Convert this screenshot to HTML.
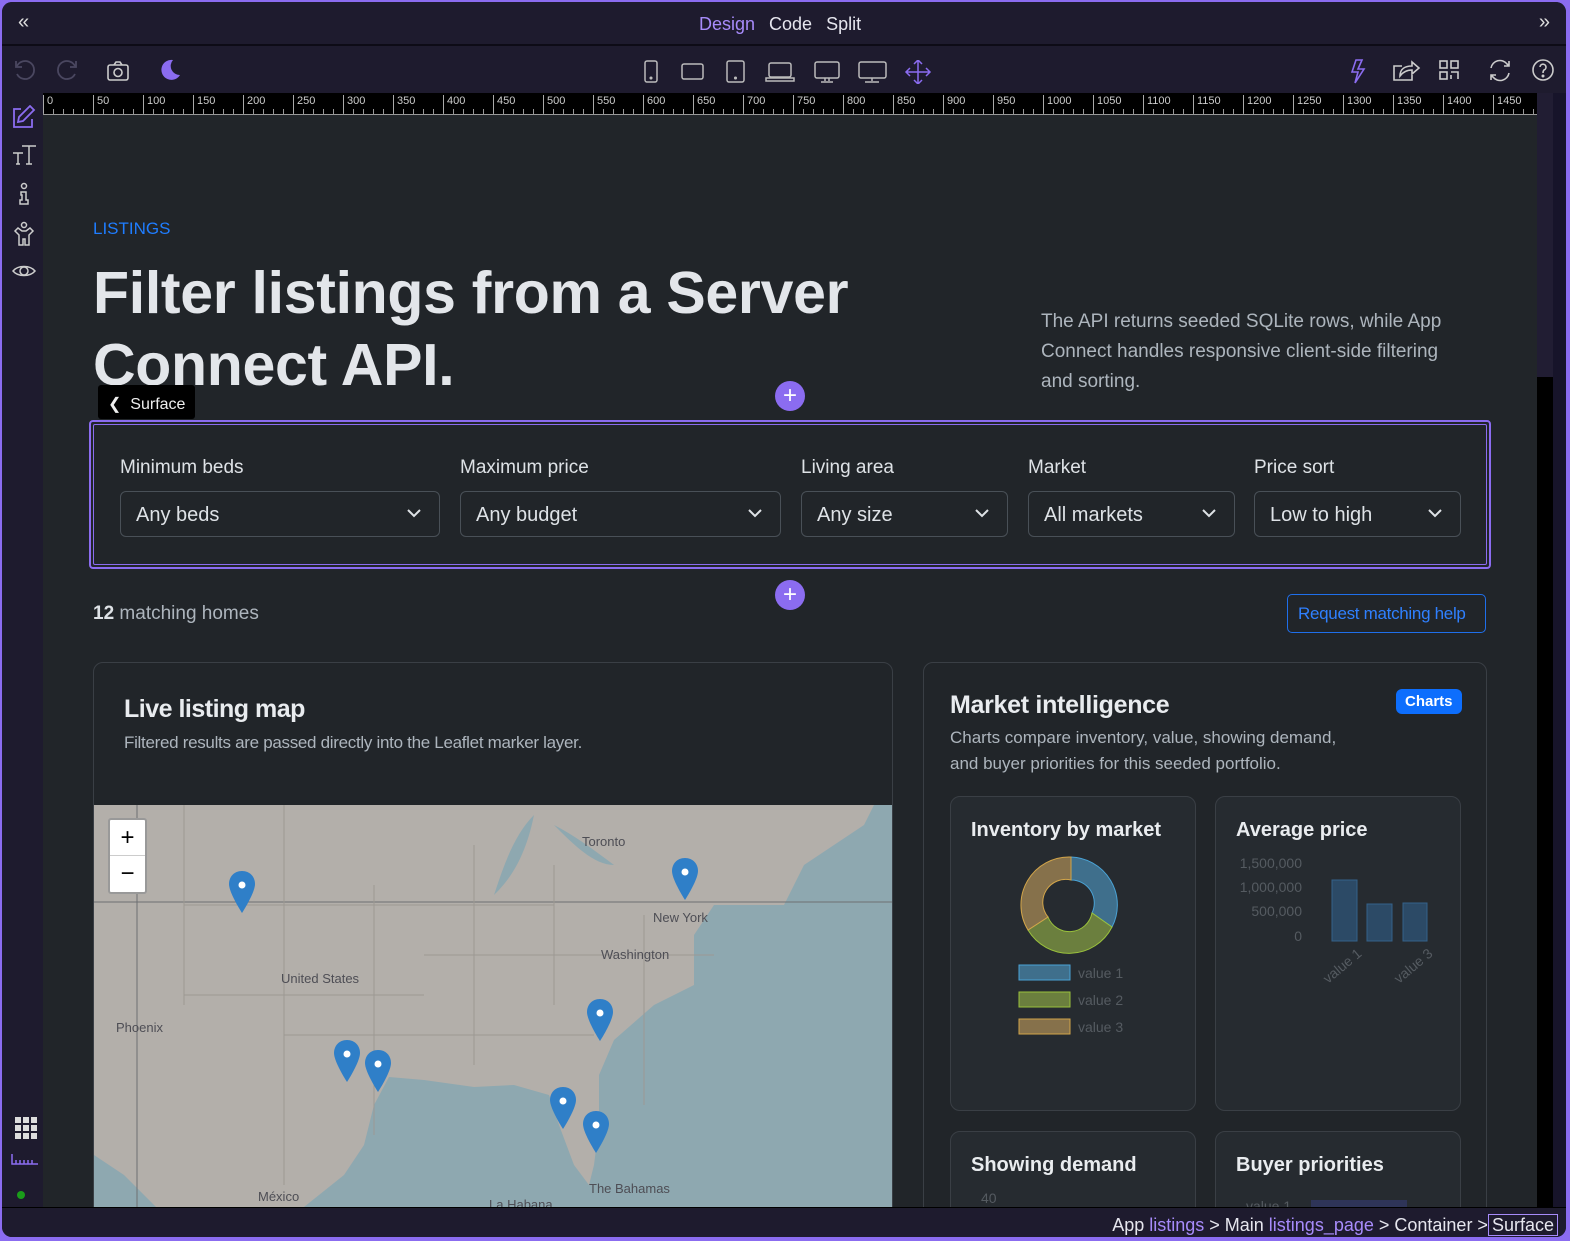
<!DOCTYPE html>
<html><head><meta charset="utf-8">
<style>
*{box-sizing:border-box;margin:0;padding:0}
body{width:1570px;height:1241px;background:#8b6cf0;font-family:"Liberation Sans",sans-serif;overflow:hidden;position:relative}
.win{position:absolute;left:2px;top:2px;width:1564px;height:1235px;background:#1e1b2e;border-radius:10px;overflow:hidden}
.abs{position:absolute}
.hdr{left:0;top:0;width:1564px;height:44px;background:#1e1b2e;border-bottom:2px solid #0d0b16}
.tabs{position:absolute;left:697px;top:12px;font-size:18px;color:#e6e6ee}
.tabs span{margin-right:14px}
.tb{left:0;top:46px;width:1564px;height:45px;background:#1e1b2e}
.ruler{left:41px;top:91px;width:1494px;height:22px;background:#000;overflow:hidden}
.ruler span{position:absolute;top:2px;font-size:11px;color:#ccc;border-left:1px solid #aaa;padding-left:3px;height:18px}
.canvas{left:41px;top:113px;width:1494px;height:1092px;background:#212529;overflow:hidden}
.side{left:0;top:91px;width:41px;height:1114px;background:#1e1b2e}
.status{left:0;top:1205px;width:1564px;height:30px;background:#1e1b2e;border-top:1px solid #000}
.c{font-family:"Liberation Sans",sans-serif}
.lbl{font-size:19px;color:#dee2e6}
.sel{position:absolute;top:69px;height:46px;border:1px solid #495057;border-radius:6px;font-size:20px;color:#dee2e6;padding:12px 15px}
.sel svg{position:absolute;right:18px;top:17px}
.card{position:absolute;border:1px solid #3a3f45;border-radius:10px;background:#212529}
.icard{position:absolute;border:1px solid #3a3f45;border-radius:10px;background:#262b30}
.icard h4{position:absolute;left:20px;top:22px;font-size:20px;color:#e9ecef;font-weight:bold}
.g{font-size:14px;color:#555b61}
</style></head><body>
<div class="win">
 <div class="abs hdr">
  <div class="abs" style="left:16px;top:9px;color:#ddd;font-size:20px">«</div>
  <div class="tabs"><span style="color:#a78bfa">Design</span><span>Code</span><span>Split</span></div>
  <div class="abs" style="right:16px;top:9px;color:#ddd;font-size:20px">»</div>
 </div>
 <div class="abs tb">
  <svg class="abs" style="left:10px;top:10px" width="70" height="26" viewBox="0 0 70 26" fill="none" stroke="#4a4760" stroke-width="1.8"><path d="M5 8a9 9 0 1 1 0 8"/><path d="M4 3v6h6"/><path d="M63 8a9 9 0 1 0 0 8"/><path d="M64 3v6h-6"/></svg>
  <svg class="abs" style="left:104px;top:12px" width="24" height="22" viewBox="0 0 24 22" fill="none" stroke="#ccc" stroke-width="1.6"><rect x="2" y="5" width="20" height="15" rx="2"/><path d="M8 5l2-3h4l2 3"/><circle cx="12" cy="12.5" r="4"/></svg>
  <svg class="abs" style="left:156px;top:10px" width="24" height="24" viewBox="0 0 24 24"><path d="M15 2a10 10 0 1 0 7 15A9 9 0 0 1 15 2z" fill="#8b6cf0"/></svg>
  <svg class="abs" style="left:640px;top:12px" width="290" height="24" viewBox="0 0 290 24" fill="none" stroke="#bbb" stroke-width="1.5">
   <rect x="3" y="1" width="12" height="21" rx="2"/><circle cx="9" cy="18" r=".8" fill="#bbb"/>
   <rect x="40" y="4" width="21" height="15" rx="2"/>
   <rect x="85" y="1" width="17" height="21" rx="2"/><circle cx="93.5" cy="18" r=".8" fill="#bbb"/>
   <rect x="127" y="3" width="22" height="14" rx="2"/><path d="M124 18h28v3h-28z"/>
   <rect x="173" y="2" width="24" height="16" rx="2"/><path d="M183 18v3M187 18v3M179 22h12"/>
   <rect x="217" y="2" width="27" height="16" rx="2"/><path d="M230 18v3M223 22h14"/>
   <g stroke="#8b6cf0"><path d="M276 0v24M264 12h24M272 4l4-4 4 4M272 20l4 4 4-4M268 8l-4 4 4 4M284 8l4 4-4 4"/></g>
  </svg>
  <svg class="abs" style="left:1348px;top:10px" width="210" height="26" viewBox="0 0 210 26" fill="none" stroke="#ccc" stroke-width="1.6">
   <path d="M6 2l-4 12h6l-3 11 9-14h-6l4-9z" stroke="#8b6cf0"/>
   <path d="M52 8h-8v14h18v-5M50 18c0-7 5-10 12-10V4l7 6-7 6v-4c-5 0-9 2-12 6z"/>
   <rect x="90" y="3" width="7" height="7"/><rect x="101" y="3" width="7" height="7"/><rect x="90" y="14" width="7" height="7"/><path d="M101 14h7v7M101 17v4"/>
   <path d="M141 10a9 9 0 0 1 16-4l2 2M159 3v5h-5M159 15a9 9 0 0 1-16 4l-2-2M141 22v-5h5"/>
   <circle cx="193" cy="12" r="10"/><path d="M190 9a3 3 0 1 1 4 3c-1 1-1 2-1 3"/><circle cx="193" cy="18" r=".7" fill="#ccc"/>
  </svg>
 </div>
 <div class="abs ruler">
  <div style="position:absolute;left:0;right:0;bottom:0;height:6px;background:repeating-linear-gradient(90deg,#999 0 1px,transparent 1px 10px)"></div>
  <div style="position:absolute;left:0;right:0;bottom:0;height:1px;background:#999"></div>
  <span style="left:0">0</span><span style="left:50px">50</span><span style="left:100px">100</span><span style="left:150px">150</span><span style="left:200px">200</span><span style="left:250px">250</span><span style="left:300px">300</span><span style="left:350px">350</span><span style="left:400px">400</span><span style="left:450px">450</span><span style="left:500px">500</span><span style="left:550px">550</span><span style="left:600px">600</span><span style="left:650px">650</span><span style="left:700px">700</span><span style="left:750px">750</span><span style="left:800px">800</span><span style="left:850px">850</span><span style="left:900px">900</span><span style="left:950px">950</span><span style="left:1000px">1000</span><span style="left:1050px">1050</span><span style="left:1100px">1100</span><span style="left:1150px">1150</span><span style="left:1200px">1200</span><span style="left:1250px">1250</span><span style="left:1300px">1300</span><span style="left:1350px">1350</span><span style="left:1400px">1400</span><span style="left:1450px">1450</span><span style="left:1500px">1500</span>
 </div>
 <div class="abs side">
  <svg class="abs" style="left:9px;top:12px" width="26" height="190" viewBox="0 0 26 190" fill="none" stroke="#ccc" stroke-width="1.5">
   <g stroke="#8b6cf0" stroke-width="1.8"><path d="M10 4H3v18h18v-8"/><path d="M19 1l4 4-11 11-5 1 1-5z"/></g>
   <path d="M2 48h10M7 48v11M5 59h4M11 41h14M18 41v18M15 59h6"/>
   <circle cx="13" cy="81" r="2.5"/><path d="M10 87h5v8h2v4H9v-4h2v-5h-1z"/>
   <path d="M8 130l-4-4 3-3 4 3h4l4-3 3 3-4 4v10h-4v-6h-2v6H8z"/><circle cx="13" cy="120" r="2.5"/>
   <path d="M2 166c5-6 17-6 22 0-5 6-17 6-22 0z"/><circle cx="13" cy="166" r="4"/>
  </svg>
  <div class="abs" style="left:13px;top:1024px;width:22px;height:22px;background:repeating-linear-gradient(90deg,#ddd 0 6px,transparent 6px 8px);-webkit-mask:repeating-linear-gradient(#000 0 6px,transparent 6px 8px)"></div>
  <svg class="abs" style="left:9px;top:1060px" width="28" height="12" viewBox="0 0 28 12" fill="none" stroke="#8b6cf0" stroke-width="1.5"><path d="M1 1v10h26M5 11V7M9 11V7M13 11V7M17 11V7M21 11V7"/></svg>
  <div class="abs" style="left:15px;top:1098px;width:8px;height:8px;border-radius:50%;background:#1a9c1a"></div>
 </div>
 <div class="abs" style="left:1535px;top:91px;width:16px;height:1114px;background:#000"><div style="height:284px;background:#211d33"></div></div>
 <div class="abs" style="left:1551px;top:91px;width:13px;height:1114px;background:#17142a"></div>

 <div class="abs canvas">
  <div class="abs c" style="left:50px;top:104px;font-size:17px;color:#1f7dff">LISTINGS</div>
  <div class="abs c" style="left:50px;top:142px;font-size:59px;line-height:72px;font-weight:bold;color:#e3e6ea;letter-spacing:-0.3px;width:900px">Filter listings from a Server<br>Connect API.</div>
  <div class="abs c" style="left:998px;top:192px;font-size:19px;line-height:30px;color:#adb5bd;width:425px">The API returns seeded SQLite rows, while App Connect handles responsive client-side filtering and sorting.</div>
  <div class="abs c" style="left:55px;top:270px;height:34px;background:#000;color:#eee;font-size:16px;padding:9px 10px 0 10px;border-radius:3px">&#10094;&nbsp; Surface</div>
  <div class="abs" style="left:732px;top:266px;width:30px;height:30px;border-radius:50%;background:#8b6cf0;color:#fff;text-align:center;font-size:24px;line-height:29px">+</div>
  <div class="abs" style="left:46px;top:305px;width:1402px;height:149px;border:2px solid #8b6cf0;border-radius:4px">
   <div class="abs" style="left:2px;top:2px;right:2px;bottom:2px;border:1px solid #8b6cf0;border-radius:2px"></div>
   <div class="abs c lbl" style="left:29px;top:35px">Minimum beds</div>
   <div class="abs c lbl" style="left:369px;top:35px">Maximum price</div>
   <div class="abs c lbl" style="left:710px;top:35px">Living area</div>
   <div class="abs c lbl" style="left:937px;top:35px">Market</div>
   <div class="abs c lbl" style="left:1163px;top:35px">Price sort</div>
   <div class="sel c" style="left:29px;width:320px">Any beds<svg width="14" height="9" viewBox="0 0 14 9"><path d="M1 1l6 6 6-6" stroke="#dee2e6" stroke-width="2" fill="none"/></svg></div>
   <div class="sel c" style="left:369px;width:321px">Any budget<svg width="14" height="9" viewBox="0 0 14 9"><path d="M1 1l6 6 6-6" stroke="#dee2e6" stroke-width="2" fill="none"/></svg></div>
   <div class="sel c" style="left:710px;width:207px">Any size<svg width="14" height="9" viewBox="0 0 14 9"><path d="M1 1l6 6 6-6" stroke="#dee2e6" stroke-width="2" fill="none"/></svg></div>
   <div class="sel c" style="left:937px;width:207px">All markets<svg width="14" height="9" viewBox="0 0 14 9"><path d="M1 1l6 6 6-6" stroke="#dee2e6" stroke-width="2" fill="none"/></svg></div>
   <div class="sel c" style="left:1163px;width:207px">Low to high<svg width="14" height="9" viewBox="0 0 14 9"><path d="M1 1l6 6 6-6" stroke="#dee2e6" stroke-width="2" fill="none"/></svg></div>
  </div>
  <div class="abs" style="left:732px;top:465px;width:30px;height:30px;border-radius:50%;background:#8b6cf0;color:#fff;text-align:center;font-size:24px;line-height:29px">+</div>
  <div class="abs c" style="left:50px;top:488px;font-size:19px;color:#adb5bd"><b style="color:#dee2e6">12</b> matching homes</div>
  <div class="abs c" style="left:1244px;top:479px;width:199px;height:39px;border:1px solid #1f6feb;border-radius:5px;color:#2f80ff;font-size:17px;padding:9px 0 0 10px;letter-spacing:-0.3px">Request matching help</div>

  <div class="card" style="left:50px;top:547px;width:800px;height:560px;overflow:hidden">
   <div class="abs c" style="left:30px;top:32px;font-size:25px;font-weight:bold;color:#e9ecef;letter-spacing:-0.5px">Live listing map</div>
   <div class="abs c" style="left:30px;top:70px;font-size:17px;color:#adb5bd;letter-spacing:-0.3px">Filtered results are passed directly into the Leaflet marker layer.</div>
   <svg class="abs" style="left:0;top:142px" width="800" height="410" viewBox="0 0 800 410">
    <rect width="800" height="410" fill="#b3afaa"/>
    <path d="M800 0L780 0 770 20 740 40 710 60 700 80 690 100 640 100 620 100 600 130 600 180 560 200 520 235 505 270 505 320 500 360 495 380 480 360 465 320 455 290 420 280 380 282 330 275 295 272 280 300 270 340 250 370 200 410 800 410z" fill="#8ea8b0"/>
    <path d="M0 350L30 370 60 400 70 410 0 410z" fill="#8ea8b0"/>
    <path d="M440 10C430 60 410 80 400 90 410 60 420 30 440 10zM460 20C480 40 500 60 520 60 500 45 480 30 460 20z" fill="#8ea8b0"/>
    <path d="M0 97H800M43 0V410" stroke="#6d6f72" stroke-width="1"/>
    <g stroke="#9c9893" stroke-width="1" fill="none"><path d="M90 0V200M190 0V380M280 80V330M380 40V260M90 100H460M90 190H330M330 150H620M190 230H500M460 60V200M550 110V300"/></g>
    <g font-family="Liberation Sans" font-size="13" fill="#4e4e55"><text x="488" y="41">Toronto</text><text x="559" y="117">New York</text><text x="507" y="154">Washington</text><text x="187" y="178">United States</text><text x="22" y="227">Phoenix</text><text x="164" y="396">México</text><text x="495" y="388">The Bahamas</text><text x="395" y="404">La Habana</text></g>
    <g fill="#2f7fc8">
     <path transform="translate(148,66)" d="M0 0c-8 0-13 6-13 13 0 9 13 29 13 29s13-20 13-29c0-7-5-13-13-13z"/>
     <path transform="translate(591,53)" d="M0 0c-8 0-13 6-13 13 0 9 13 29 13 29s13-20 13-29c0-7-5-13-13-13z"/>
     <path transform="translate(506,194)" d="M0 0c-8 0-13 6-13 13 0 9 13 29 13 29s13-20 13-29c0-7-5-13-13-13z"/>
     <path transform="translate(253,235)" d="M0 0c-8 0-13 6-13 13 0 9 13 29 13 29s13-20 13-29c0-7-5-13-13-13z"/>
     <path transform="translate(284,245)" d="M0 0c-8 0-13 6-13 13 0 9 13 29 13 29s13-20 13-29c0-7-5-13-13-13z"/>
     <path transform="translate(469,282)" d="M0 0c-8 0-13 6-13 13 0 9 13 29 13 29s13-20 13-29c0-7-5-13-13-13z"/>
     <path transform="translate(502,306)" d="M0 0c-8 0-13 6-13 13 0 9 13 29 13 29s13-20 13-29c0-7-5-13-13-13z"/>
    </g>
    <g fill="#fff"><circle cx="148" cy="80" r="3.5"/><circle cx="591" cy="67" r="3.5"/><circle cx="506" cy="208" r="3.5"/><circle cx="253" cy="249" r="3.5"/><circle cx="284" cy="259" r="3.5"/><circle cx="469" cy="296" r="3.5"/><circle cx="502" cy="320" r="3.5"/></g>
   </svg>
   <div class="abs" style="left:14px;top:155px;width:39px;height:76px;background:#fff;border:2px solid #999;border-radius:3px;font-size:24px;text-align:center;color:#000;line-height:35px">+<div style="border-top:1px solid #ccc">−</div></div>
  </div>

  <div class="card" style="left:880px;top:547px;width:564px;height:560px">
   <div class="abs c" style="left:26px;top:28px;font-size:25px;font-weight:bold;color:#e9ecef;letter-spacing:-0.3px">Market intelligence</div>
   <div class="abs c" style="left:472px;top:26px;background:#0d6efd;color:#fff;font-weight:bold;font-size:15px;padding:4px 9px;border-radius:6px">Charts</div>
   <div class="abs c" style="left:26px;top:62px;font-size:17px;line-height:26px;color:#adb5bd;width:400px">Charts compare inventory, value, showing demand, and buyer priorities for this seeded portfolio.</div>
   <div class="icard" style="left:26px;top:133px;width:246px;height:315px"><h4 class="c">Inventory by market</h4>
    <svg class="abs" style="left:60px;top:55px" width="120" height="190" viewBox="0 0 120 190">
     <path d="M60 5a48 48 0 0 1 41 70l-20-14a23 23 0 0 0-21-33z" fill="#3f6f8c" stroke="#4aa3d6"/>
     <path d="M101 75a48 48 0 0 1-84 3l20-13a23 23 0 0 0 44-4z" fill="#6b7f3e" stroke="#9ac23c"/>
     <path d="M17 78A48 48 0 0 1 60 5v23a23 23 0 0 0-23 37z" fill="#86714b" stroke="#d2a54a"/>
     <rect x="8" y="113" width="51" height="15" fill="#3f6f8c" stroke="#4aa3d6"/>
     <rect x="8" y="140" width="51" height="15" fill="#6b7f3e" stroke="#9ac23c"/>
     <rect x="8" y="167" width="51" height="15" fill="#86714b" stroke="#d2a54a"/>
     <g font-family="Liberation Sans" font-size="14" fill="#555b61"><text x="67" y="126">value 1</text><text x="67" y="153">value 2</text><text x="67" y="180">value 3</text></g>
    </svg>
   </div>
   <div class="icard" style="left:291px;top:133px;width:246px;height:315px"><h4 class="c">Average price</h4>
    <svg class="abs" style="left:20px;top:55px" width="220" height="150" viewBox="0 0 220 150">
     <g font-family="Liberation Sans" font-size="14" fill="#555b61" text-anchor="end"><text x="66" y="16">1,500,000</text><text x="66" y="40">1,000,000</text><text x="66" y="64">500,000</text><text x="66" y="89">0</text></g>
     <g fill="#2c4a66" stroke="#34628a"><rect x="96" y="28" width="25" height="61"/><rect x="131" y="52" width="25" height="37"/><rect x="167" y="51" width="24" height="38"/></g>
     <g font-family="Liberation Sans" font-size="14" fill="#555b61"><text transform="translate(92,132) rotate(-40)">value 1</text><text transform="translate(163,132) rotate(-40)">value 3</text></g>
    </svg>
   </div>
   <div class="icard" style="left:26px;top:468px;width:246px;height:200px"><h4 class="c">Showing demand</h4><div class="abs g c" style="left:30px;top:58px">40</div></div>
   <div class="icard" style="left:291px;top:468px;width:246px;height:200px"><h4 class="c">Buyer priorities</h4><div class="abs g c" style="left:30px;top:66px">value 1</div><div class="abs" style="left:95px;top:68px;width:96px;height:14px;background:#2e3458"></div></div>
  </div>
 </div>

 <div class="abs status c" style="font-size:18px;color:#e6e6ee">
  <div class="abs" style="right:8px;top:7px;white-space:nowrap">App <span style="color:#a78bfa">listings</span> &gt; Main <span style="color:#a78bfa">listings_page</span> &gt; Container &gt;<span style="border:1px solid #a78bfa;padding:0 3px;color:#e6e6ee">Surface</span></div>
 </div>
</div>
</body></html>
